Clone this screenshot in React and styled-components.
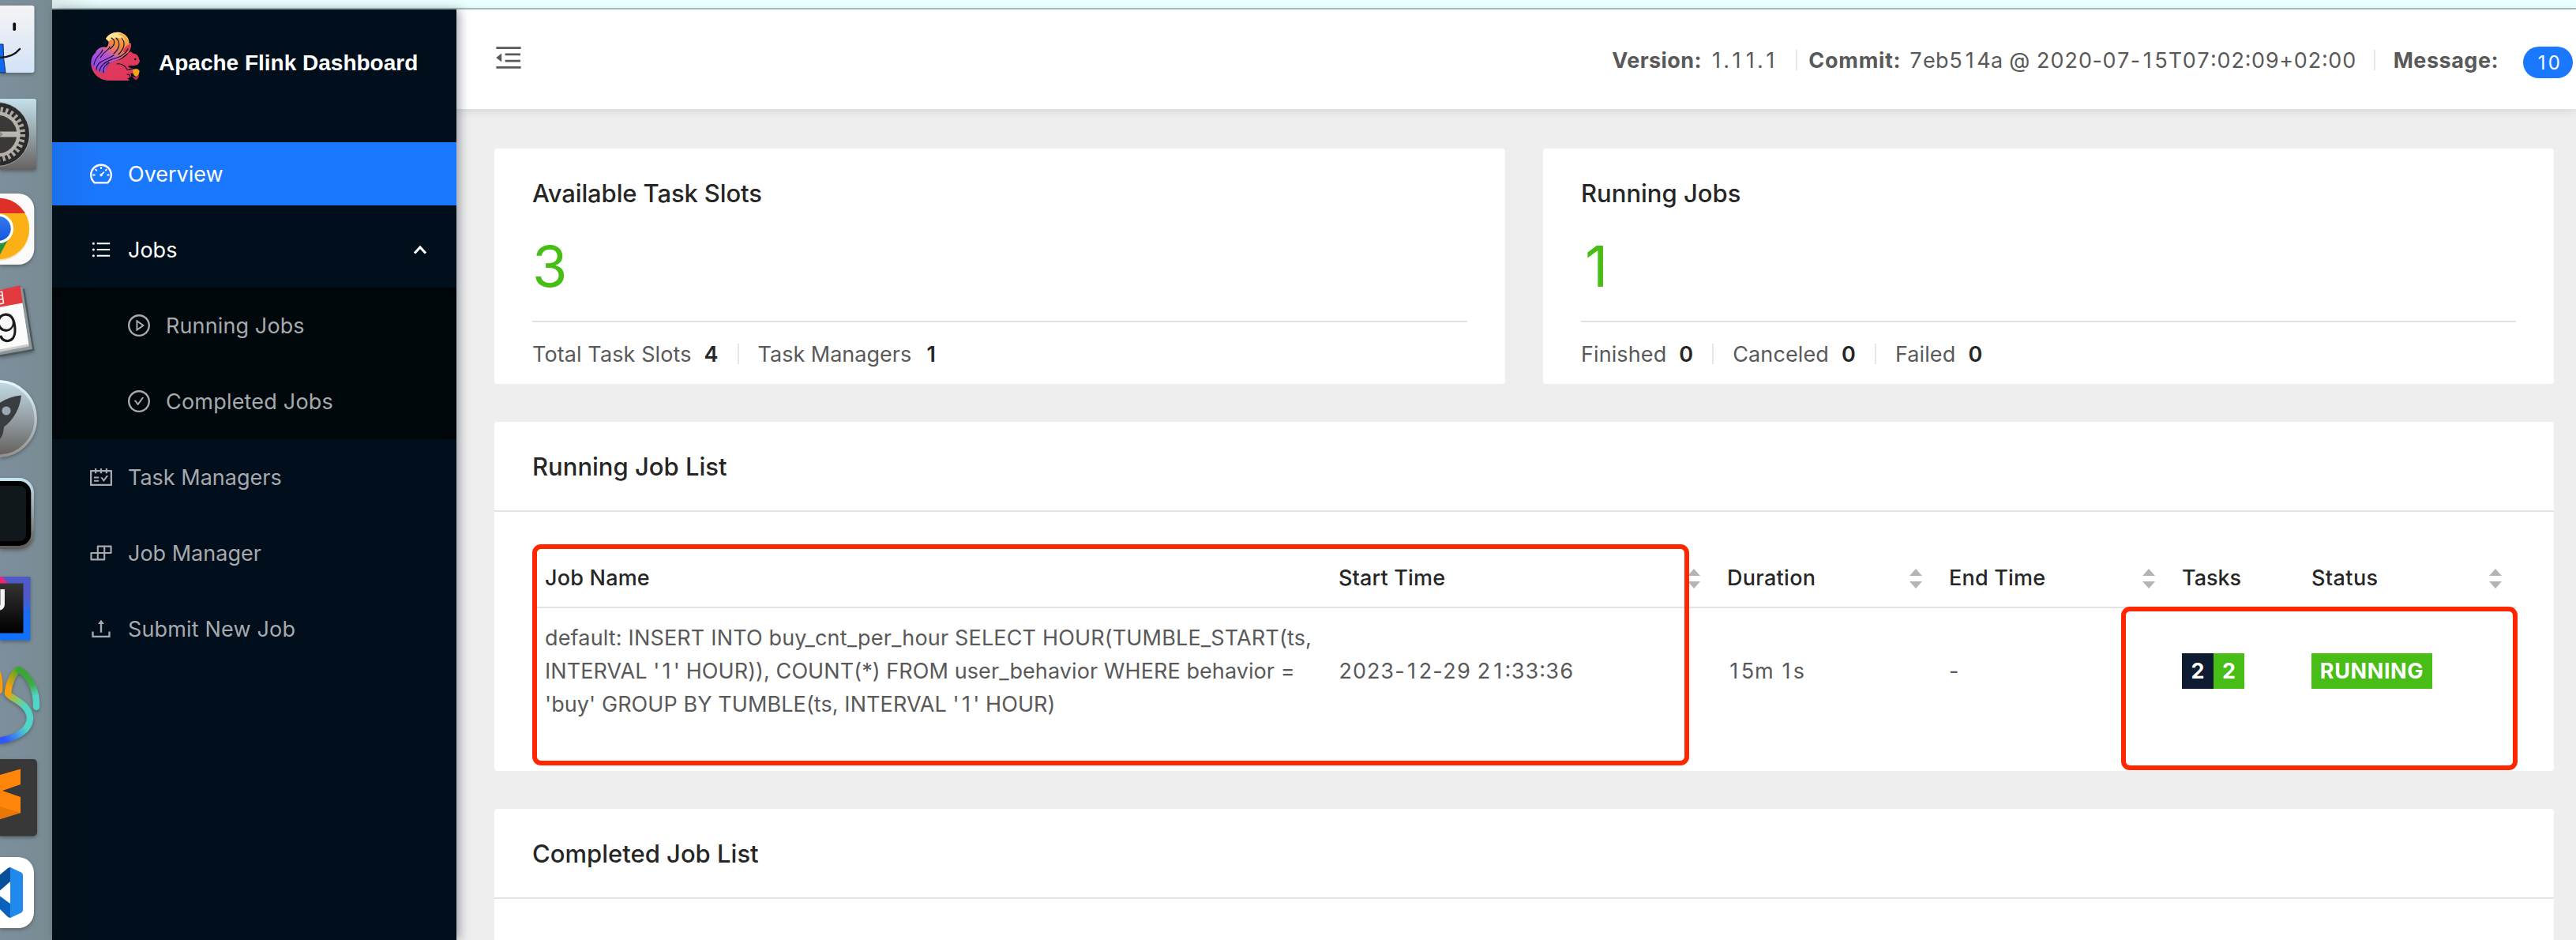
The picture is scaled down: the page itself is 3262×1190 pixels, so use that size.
import React from "react";
import styled, { createGlobalStyle } from "styled-components";
import {
  AiOutlineBars,
  AiOutlineBuild,
  AiOutlineCheckCircle,
  AiOutlineDashboard,
  AiOutlineMenuFold,
  AiOutlinePlayCircle,
  AiOutlineSchedule,
  AiOutlineUpload,
} from "react-icons/ai";

const GlobalStyle = createGlobalStyle`
  * { box-sizing: border-box; }
  body {
    margin: 0;
    background: #eeeeee;
    color: #595959;
    font-family: Inter, "Noto Sans", "Noto Sans CJK SC", sans-serif;
    font-size: 27px;
    overflow: hidden;
  }
`;

const Desktop = styled.div`
  display: flex;
  width: 3262px;
  height: 1190px;
  overflow: hidden;
`;

/* ---------- Dock ---------- */

const Dock = styled.aside`
  display: flex;
  flex-direction: column;
  flex: none;
  width: 66px;
  height: 1190px;
  background: linear-gradient(90deg, #7d8f9b 0%, #7b8d98 45%, #788c93 100%);
`;

const DockIcon = styled.svg`
  display: block;
  flex: none;
  width: 66px;
  height: ${(p) => p.$h}px;
  margin-top: ${(p) => p.$gap}px;
  filter: drop-shadow(0 2px 2px rgba(0, 0, 0, 0.3));
`;

function FinderIcon() {
  return (
    <DockIcon viewBox="0 0 66 100" $h={100} $gap={0}>
      <defs>
        <linearGradient id="finder" x1="0" y1="0" x2="0" y2="1">
          <stop offset="0" stopColor="#f5f4f4" />
          <stop offset="1" stopColor="#d3e2f7" />
        </linearGradient>
      </defs>
      <rect x="-20" y="7" width="63.5" height="85" rx="3" fill="url(#finder)" />
      <path d="M-2 56H4Q4 75 7 92H-2Z" fill="#0f68f2" stroke="#0a2a5c" strokeWidth="1" />
      <path d="M-2 73Q16 73 25 62" fill="none" stroke="#161616" strokeWidth="2.4" strokeLinecap="round" />
      <rect x="16.3" y="28.5" width="3.8" height="10.5" rx="1.8" fill="#111" />
    </DockIcon>
  );
}

function SettingsIcon() {
  return (
    <DockIcon viewBox="0 120 66 102" $h={102} $gap={20}>
      <defs>
        <linearGradient id="prefs" x1="0" y1="0" x2="0" y2="1">
          <stop offset="0" stopColor="#c4e0ea" />
          <stop offset="0.5" stopColor="#97a3a8" />
          <stop offset="1" stopColor="#66625f" />
        </linearGradient>
      </defs>
      <rect x="-20" y="125" width="66" height="90" rx="3" fill="url(#prefs)" />
      <circle cx="-3" cy="170" r="40.5" fill="#2b2b2b" stroke="#b8c3c9" strokeWidth="0.8" />
      <circle cx="-3" cy="170" r="31.5" fill="none" stroke="#aaa69f" strokeWidth="7" strokeDasharray="3.3 3.3" />
      <circle cx="-3" cy="170" r="26.5" fill="#3a3937" stroke="#b4b1aa" strokeWidth="4.5" />
      <path d="M-3 166.5H25V173.5H-3Z" fill="#bab7b0" />
      <path d="M-8 160L4 170L-8 180Z" fill="#8d8b86" />
    </DockIcon>
  );
}

function ChromeIcon() {
  return (
    <DockIcon viewBox="0 240 66 100" $h={100} $gap={18}>
      <defs>
        <clipPath id="chromeDisc">
          <circle cx="-1.7" cy="289.4" r="38.8" />
        </clipPath>
        <linearGradient id="chromeBlue" x1="0" y1="0" x2="0" y2="1">
          <stop offset="0" stopColor="#3478ee" />
          <stop offset="1" stopColor="#1558dd" />
        </linearGradient>
      </defs>
      <rect x="-50" y="245" width="93.3" height="90" rx="20" fill="#fafafa" />
      <circle cx="-1.7" cy="291" r="39" fill="#f3dcae" />
      <g clipPath="url(#chromeDisc)">
        <rect x="-45" y="245" width="90" height="90" fill="#fbb116" />
        <rect x="-45" y="245" width="90" height="25" fill="#df2f29" />
        <path d="M-20 292L12 300L-2 326L-20 330Z" fill="#27913b" />
      </g>
      <circle cx="-1.7" cy="289.4" r="18.8" fill="#fff" />
      <circle cx="-1.7" cy="289.4" r="15.4" fill="url(#chromeBlue)" />
    </DockIcon>
  );
}

const CalendarText = styled.text`
  font-family: ${(p) => (p.$cjk ? '"Noto Sans CJK SC", sans-serif' : "Inter, sans-serif")};
  font-size: ${(p) => p.$size}px;
  font-weight: ${(p) => p.$weight || 300};
  text-anchor: end;
`;

function CalendarIcon() {
  return (
    <DockIcon viewBox="0 356 66 104" $h={104} $gap={16}>
      <path d="M-2 366L31 365.5L43.5 444L-2 452Z" fill="#4d5658" />
      <path d="M-2 366L28.5 364L41 442L-2 449.5Z" fill="#8b979b" />
      <path d="M-2 386L28.3 383.5L36.8 438.5L-2 446Z" fill="#cfcdca" />
      <path d="M-2 386L28.3 383.5L36.3 435.5L-2 442.5Z" fill="#fbfbfb" />
      <path d="M-2 367.5L25.5 361.5L28.7 383.5L-2 389Z" fill="#e23a3e" />
      <CalendarText $cjk $size={19} $weight={400} x="8.5" y="383" fill="#fff" transform="rotate(-8 8 382)">
        月
      </CalendarText>
      <CalendarText $size={49} x="26" y="430.5" fill="#1b1b1b" transform="rotate(-8 25 431)">
        9
      </CalendarText>
    </DockIcon>
  );
}

function LaunchpadIcon() {
  return (
    <DockIcon viewBox="0 476 66 108" $h={108} $gap={16}>
      <defs>
        <linearGradient id="launch" x1="0" y1="0" x2="0" y2="1">
          <stop offset="0" stopColor="#c2dbe5" />
          <stop offset="0.5" stopColor="#95a0a5" />
          <stop offset="1" stopColor="#635f5c" />
        </linearGradient>
        <linearGradient id="launchRing" x1="0" y1="0" x2="0" y2="1">
          <stop offset="0" stopColor="#e6f8ff" />
          <stop offset="1" stopColor="#95918f" />
        </linearGradient>
      </defs>
      <circle cx="-2" cy="530" r="47.3" fill="url(#launch)" stroke="url(#launchRing)" strokeWidth="3.4" />
      <path d="M27 500.5Q11 502 -2 511V558Q4.5 552 5 540.5Q24 526 27 500.5Z" fill="#3a3d40" />
      <circle cx="8" cy="520" r="5.6" fill="#9ba9b0" />
    </DockIcon>
  );
}

function TerminalIcon() {
  return (
    <DockIcon viewBox="0 600 66 100" $h={100} $gap={16}>
      <defs>
        <linearGradient id="term" x1="0" y1="0" x2="0" y2="1">
          <stop offset="0" stopColor="#c6e6f2" />
          <stop offset="1" stopColor="#5f5855" />
        </linearGradient>
      </defs>
      <rect x="-40" y="605" width="83" height="90" rx="19" fill="url(#term)" />
      <rect x="-40" y="609" width="79.3" height="82" rx="15" fill="#000" />
      <rect x="-40" y="615" width="73" height="70" rx="8" fill="#11181b" />
    </DockIcon>
  );
}

const IdeaLetters = styled.text`
  font-family: Inter, sans-serif;
  font-size: 37px;
  font-weight: 700;
  text-anchor: end;
`;

function IdeaIcon() {
  return (
    <DockIcon viewBox="0 724 66 92" $h={92} $gap={24}>
      <defs>
        <linearGradient id="idea" x1="0" y1="0" x2="0" y2="1">
          <stop offset="0" stopColor="#4b5ac6" />
          <stop offset="0.5" stopColor="#3763e0" />
          <stop offset="0.51" stopColor="#1f68f0" />
          <stop offset="1" stopColor="#0f72fb" />
        </linearGradient>
        <linearGradient id="ideaCore" x1="0" y1="0" x2="0" y2="1">
          <stop offset="0" stopColor="#333" />
          <stop offset="1" stopColor="#000" />
        </linearGradient>
      </defs>
      <rect x="-10" y="730" width="48.3" height="80.5" fill="url(#idea)" />
      <path d="M29.5 767L38.3 757V730H3L10 738.5H29.5Z" fill="#4e5ac6" />
      <path d="M-2 730H3L10.5 739H-2Z" fill="#e4287a" />
      <rect x="-10" y="738.5" width="39.5" height="63" fill="url(#ideaCore)" />
      <IdeaLetters x="8.5" y="773" fill="#f4f4f4">
        J
      </IdeaLetters>
    </DockIcon>
  );
}

function RibbonIcon() {
  return (
    <DockIcon viewBox="0 836 66 112" $h={112} $gap={20}>
      <defs>
        <linearGradient id="r1" gradientUnits="userSpaceOnUse" x1="25" y1="848" x2="46" y2="895">
          <stop offset="0.1" stopColor="#3ba536" />
          <stop offset="0.45" stopColor="#40aa45" />
          <stop offset="0.75" stopColor="#50d6c8" />
        </linearGradient>
        <linearGradient id="r2" gradientUnits="userSpaceOnUse" x1="10" y1="868" x2="27" y2="850">
          <stop offset="0" stopColor="#f59f0a" />
          <stop offset="1" stopColor="#45a733" />
        </linearGradient>
        <linearGradient id="r3" gradientUnits="userSpaceOnUse" x1="10" y1="876" x2="32" y2="894">
          <stop offset="0" stopColor="#f59f0a" />
          <stop offset="0.5" stopColor="#8cc765" />
          <stop offset="1" stopColor="#50d6c8" />
        </linearGradient>
        <linearGradient id="r4" gradientUnits="userSpaceOnUse" x1="32" y1="920" x2="8" y2="938">
          <stop offset="0" stopColor="#50d6c8" />
          <stop offset="1" stopColor="#3156fb" />
        </linearGradient>
      </defs>
      <g fill="none" strokeWidth="8.4" strokeLinecap="round">
        <path d="M-4 850Q0 860 -1 874" stroke="#f99b0a" />
        <path d="M38 909C38 925 18 936 -4 938" stroke="url(#r4)" />
        <path d="M10 877C10 884 38 889 38 910" stroke="url(#r3)" />
        <path d="M24 848C18 848 11 866 10 877" stroke="url(#r2)" />
        <path d="M46 895C47 869 33 852 24 848" stroke="url(#r1)" />
      </g>
    </DockIcon>
  );
}

function SublimeIcon() {
  return (
    <DockIcon viewBox="0 956 66 108" $h={108} $gap={8}>
      <rect x="-20" y="961" width="67" height="97.5" rx="5" fill="#383838" />
      <path d="M-2 981.5L26 973.5V993L3 1001L26 1009V1029L-2 1037.5Z" fill="#ff860a" />
      <path d="M-2 1020.5L26 1029L-2 1037.5Z" fill="#e87708" />
    </DockIcon>
  );
}

function CodeIcon() {
  return (
    <DockIcon viewBox="0 1080 66 100" $h={100} $gap={16}>
      <rect x="-50" y="1085" width="93" height="90" rx="20" fill="#fff" />
      <path d="M-2 1109L10 1099Q12 1098 13 1098V1116L-2 1129Z" fill="#0a4f9b" />
      <path d="M-2 1133L13 1144V1162Q11 1162 9 1160L-2 1149Z" fill="#0b62bd" />
      <path d="M13 1098L27 1104.5Q29 1105.5 29 1108V1152Q29 1154.5 27 1155.5L13 1162Z" fill="#1f89ec" />
    </DockIcon>
  );
}

/* ---------- Window ---------- */

const Window = styled.div`
  display: flex;
  flex-direction: column;
  flex: 1;
  min-width: 0;
`;

const BrowserEdge = styled.div`
  flex: none;
  height: 12px;
  border-bottom: 2px solid #a8c1be;
  background: linear-gradient(90deg, #dcecea 0, #ebffff 60px);
`;

const Layout = styled.div`
  display: flex;
  flex: 1;
  min-height: 0;
`;

const Sider = styled.nav`
  position: relative;
  z-index: 2;
  flex: none;
  width: 512px;
  background: linear-gradient(90deg, #020f18 0, #010f1d 60px);
  box-shadow: 4px 0 12px rgba(0, 21, 41, 0.35);
  color: #a6a9ad;
`;

const Brand = styled.div`
  display: flex;
  align-items: flex-start;
  gap: 23px;
  height: 160px;
  padding: 26px 0 0 48px;
`;

const BrandName = styled.h1`
  margin: 22px 0 0;
  color: #fff;
  font: 700 28px/40px "Liberation Sans", Arial, sans-serif;
  white-space: nowrap;
`;

const Squirrel = styled.svg`
  display: block;
  width: 64px;
  height: 66px;
`;

function FlinkLogo() {
  return (
    <Squirrel viewBox="114 38 64 66">
      <defs>
        <linearGradient id="tail" x1="0.7" y1="0" x2="0.2" y2="1">
          <stop offset="0" stopColor="#f8b24a" />
          <stop offset="0.22" stopColor="#f08a3c" />
          <stop offset="0.38" stopColor="#e0707a" />
          <stop offset="0.5" stopColor="#b652d8" />
          <stop offset="0.8" stopColor="#8f49e8" />
          <stop offset="1" stopColor="#dd3a5c" />
        </linearGradient>
      </defs>
      <path d="M134 49C138 42 147 39 155 42C160 44 164 49 163.5 55L166 55C166 61 164 67 159 69C152 76 146 77 141 79C133 83 133 92 137 101.5L131 101C120 97 114 87 115.5 77C116 72 119 68 121 67C122 62 129 58 135 60C138 56 139 52 134 49Z" fill="url(#tail)" />
      <path d="M134 49C138 42 147 39.5 154 41.5L149 44C153 44 157 47 158 51C149 45 143 49 137 52Z" fill="#fce093" />
      <path d="M134 101.5C119 97 116 88 117 81C121 92 127 93 134 91C133 86 139 77 150 76C156 74 161 70 163 66.5C166 64.5 167 66 168 67.5C173 68 176 71 176 75C178 77 177 79 174 82C169 84 165 82 162 84C166 88 171 86 172 90C170 94 167 92 165 93C168 97 164 98 161 100C163 100 166 101.5 162 102H138Z" fill="#de395c" />
      <path d="M156 65C157 60 161 57 166 55C166 61 163 65 159 68Z" fill="#de395c" />
      <g fill="none" stroke="#12101c" strokeWidth="1.1" strokeLinecap="round">
        <path d="M139 62C147 56 146 51 141 48" />
        <path d="M144 68C153 60 152 53 147 48" />
        <path d="M150 69C158 61 159 54 154 48" />
        <path d="M127 73C133 63 138 64 139 59" />
        <path d="M119 82C121 70 128 70 130 63" />
        <path d="M122 88C123 77 133 77 144 70" />
        <path d="M126 90C127 82 134 78 142 75C151 73 158 70 162 62" />
        <path d="M131 92C130 85 134 82 138 79" />
        <path d="M148 81C153 80 159 83 161 88C163 89 166 87 168 87" />
        <path d="M161 94C163 94 165 95 164 97" />
      </g>
      <circle cx="171.3" cy="75" r="1.3" fill="#111" />
      <path d="M168 89Q172 85 176.5 89Q177 94 173 97Q168 96 168 89Z" fill="#f8a21c" />
      <path d="M167 96Q172 99 176 95Q176 99 172 101.5Q169 100 167 96Z" fill="#b82a52" />
    </Squirrel>
  );
}

const Menu = styled.ul`
  display: flex;
  flex-direction: column;
  margin: 0;
  padding: 0;
  list-style: none;
`;

const SubMenu = styled(Menu)`
  background: #01080c;
  box-shadow: inset 0 4px 16px rgba(0, 0, 0, 0.45);
`;

const MenuItem = styled.li`
  display: flex;
  align-items: center;
  height: 80px;
  margin: 8px 0;
  padding: 0 32px 0 ${(p) => (p.$nested ? 94 : 46)}px;
  gap: 18px;
  color: ${(p) => (p.$bright ? "#fff" : "#a6a9ad")};
  background: ${(p) => (p.$active ? "linear-gradient(90deg, #1a70ee 0, #1a78ff 60px)" : "none")};
  letter-spacing: ${(p) => p.$ls || 0}px;
  white-space: nowrap;
`;

const MenuGlyph = styled.span`
  display: flex;
  flex: none;
  align-items: center;
  justify-content: center;
  width: 32px;
  font-size: ${(p) => (p.$small ? 28 : 32)}px;
`;

const Chevron = styled.svg`
  width: 28px;
  height: 28px;
  margin-left: auto;
`;

const Content = styled.div`
  display: flex;
  flex-direction: column;
  flex: 1;
  min-width: 0;
`;

const TopBar = styled.header`
  position: relative;
  z-index: 1;
  display: flex;
  flex: none;
  align-items: center;
  justify-content: space-between;
  height: 126px;
  padding: 0 4px 4px 46px;
  background: #fff;
  box-shadow: 0 2px 12px rgba(0, 21, 41, 0.12);

  & > svg {
    width: 40px;
    height: 40px;
  }
`;

const BuildInfo = styled.div`
  display: flex;
  align-items: center;
  margin-top: 6px;
  white-space: pre;
`;

const Label = styled.strong`
  font-weight: 700;
  letter-spacing: ${(p) => p.$ls || 0}px;
`;

const Value = styled.span`
  margin-left: 10px;
  letter-spacing: ${(p) => p.$ls || 0}px;
`;

const Divider = styled.i`
  flex: none;
  width: 2px;
  height: 26px;
  margin: 0 ${(p) => p.$right ?? 24}px 0 ${(p) => p.$left ?? 24}px;
  background: #e6e6e6;
`;

const CountBadge = styled.span`
  display: flex;
  align-items: center;
  justify-content: center;
  width: 63px;
  height: 40px;
  margin: 6px 0 0 31px;
  border-radius: 20px;
  background: #1a78ff;
  color: #fff;
  font-size: 24px;
`;

/* Digits share one advance width, while a 1 keeps its plain, unserifed shape. */
const DigitRun = styled.span`
  font-variant-numeric: tabular-nums;
`;

const One = styled.span`
  display: inline-block;
  width: 0.648em;
  text-align: center;
`;

const RaisedColon = styled.span`
  font-feature-settings: "case";
`;

function Digits({ children }) {
  return (
    <span>
      {children.match(/1|[02-9]+|:|[^0-9:]+/g).map((part, i) => {
        if (part === "1") return <One key={i}>1</One>;
        if (part === ":") return <RaisedColon key={i}>:</RaisedColon>;
        if (/\d/.test(part)) return <DigitRun key={i}>{part}</DigitRun>;
        return part;
      })}
    </span>
  );
}

const Main = styled.main`
  display: flex;
  flex-direction: column;
  gap: 48px;
  padding: 50px 28px 0 48px;
`;

const StatRow = styled.section`
  display: grid;
  grid-template-columns: 1fr 1fr;
  gap: 48px;
`;

const Card = styled.section`
  border-radius: 4px;
  background: #fff;
`;

const StatCard = styled(Card)`
  height: 298px;
  padding: 33px 48px 0;
`;

const Title = styled.h2`
  margin: 0;
  color: #262626;
  font-size: 31px;
  font-weight: 500;
  line-height: 48px;
  letter-spacing: ${(p) => p.$ls || 0}px;
`;

const BigNumber = styled.div`
  height: 139px;
  padding: 28px 0 0 ${(p) => p.$indent || 0}px;
  color: #47bd15;
  font-size: 72px;
  line-height: 80px;
`;

const Facts = styled.div`
  display: flex;
  align-items: center;
  height: 82px;
  margin-top: -2px;
  border-top: 2px solid #e1e1e1;
`;

const Fact = styled.span`
  letter-spacing: ${(p) => p.$ls || 0}px;
`;

const FactNumber = styled.b`
  width: 18px;
  margin-left: 16px;
  color: #262626;
  font-weight: 600;
  text-align: center;
`;

const CardHead = styled.div`
  display: flex;
  align-items: center;
  height: 114px;
  padding: 2px 48px 0;
  border-bottom: 2px solid #e3e3e3;
`;

const TableCard = styled(Card)`
  height: 442px;
`;

const TableWrap = styled.div`
  position: relative;
  padding: 48px;
`;

const EmptyBody = styled.div`
  height: 96px;
`;

const row = `
  display: grid;
  grid-template-columns: 1005px 492px 281px 295px 164px 275px;
  align-items: center;
`;

const HeadRow = styled.div`
  ${row}
  height: 74px;
  border-bottom: 2px solid #e3e3e3;
  color: #262626;
  font-weight: 500;
`;

const BodyRow = styled.div`
  ${row}
  height: 159px;
`;

const Cell = styled.div`
  display: flex;
  align-items: center;
  justify-content: space-between;
  padding: 0 16px;
  line-height: 42px;
  letter-spacing: ${(p) => p.$ls || 0}px;
`;

const QueryLine = styled.span`
  display: block;
  letter-spacing: ${(p) => p.$ls || 0}px;
  white-space: nowrap;
`;

const Sorter = styled.svg`
  width: 20px;
  height: 28px;
`;

function Sort() {
  return (
    <Sorter viewBox="0 0 20 28" fill="#b4b4b4">
      <path d="M10 2L18 11H2Z" />
      <path d="M2 18H18L10 27Z" />
    </Sorter>
  );
}

const Tag = styled.span`
  display: inline-flex;
  align-items: center;
  justify-content: center;
  width: ${(p) => p.$w}px;
  height: 45px;
  background: ${(p) => p.$color};
  color: #fff;
  font-weight: 700;
  letter-spacing: ${(p) => p.$ls || 0}px;
`;

const TagGroup = styled.div`
  display: flex;
`;

const Marker = styled.div`
  position: absolute;
  top: ${(p) => p.$top}px;
  left: ${(p) => p.$left}px;
  width: ${(p) => p.$w}px;
  height: ${(p) => p.$h}px;
  border: 6px solid #ff2700;
  border-radius: 11px;
  pointer-events: none;
`;

export default function App() {
  return (
    <>
      <GlobalStyle />
      <Desktop>
        <Dock>
          <FinderIcon />
          <SettingsIcon />
          <ChromeIcon />
          <CalendarIcon />
          <LaunchpadIcon />
          <TerminalIcon />
          <IdeaIcon />
          <RibbonIcon />
          <SublimeIcon />
          <CodeIcon />
        </Dock>
        <Window>
          <BrowserEdge />
          <Layout>
            <Sider>
              <Brand>
                <FlinkLogo />
                <BrandName>Apache Flink Dashboard</BrandName>
              </Brand>
              <Menu>
                <MenuItem $active $bright>
                  <MenuGlyph><AiOutlineDashboard /></MenuGlyph>
                  Overview
                </MenuItem>
                <MenuItem $bright>
                  <MenuGlyph $small><AiOutlineBars /></MenuGlyph>
                  Jobs
                  <Chevron viewBox="0 0 28 28" fill="none" stroke="#fff" strokeWidth="3.2">
                    <path d="M7 18.5L14 11L21 18.5" />
                  </Chevron>
                </MenuItem>
                <SubMenu>
                  <MenuItem $nested $ls={0.12}>
                    <MenuGlyph><AiOutlinePlayCircle /></MenuGlyph>
                    Running Jobs
                  </MenuItem>
                  <MenuItem $nested $ls={0.2}>
                    <MenuGlyph><AiOutlineCheckCircle /></MenuGlyph>
                    Completed Jobs
                  </MenuItem>
                </SubMenu>
                <MenuItem>
                  <MenuGlyph><AiOutlineSchedule /></MenuGlyph>
                  Task Managers
                </MenuItem>
                <MenuItem>
                  <MenuGlyph><AiOutlineBuild /></MenuGlyph>
                  Job Manager
                </MenuItem>
                <MenuItem $ls={0.16}>
                  <MenuGlyph><AiOutlineUpload /></MenuGlyph>
                  Submit New Job
                </MenuItem>
              </Menu>
            </Sider>
            <Content>
              <TopBar>
                <AiOutlineMenuFold />
                <BuildInfo>
                  <Label $ls={0.4}>Version:</Label>
                  <Value><Digits>1.11.1</Digits></Value>
                  <Divider $right={14} />
                  <Label $ls={0.7}>Commit:</Label>
                  <Value $ls={0.27}><Digits>7eb514a @ 2020-07-15T07:02:09+02:00</Digits></Value>
                  <Divider $left={22} $right={23} />
                  <Label $ls={0.5}>Message:</Label>
                  <CountBadge><Digits>10</Digits></CountBadge>
                </BuildInfo>
              </TopBar>
              <Main>
                <StatRow>
                  <StatCard>
                    <Title $ls={-0.12}>Available Task Slots</Title>
                    <BigNumber>3</BigNumber>
                    <Facts>
                      <Fact $ls={0.1}>Total Task Slots</Fact>
                      <FactNumber>4</FactNumber>
                      <Divider />
                      <Fact>Task Managers</Fact>
                      <FactNumber>1</FactNumber>
                    </Facts>
                  </StatCard>
                  <StatCard>
                    <Title>Running Jobs</Title>
                    <BigNumber $indent={5}>1</BigNumber>
                    <Facts>
                      <Fact $ls={0.1}>Finished</Fact>
                      <FactNumber>0</FactNumber>
                      <Divider />
                      <Fact $ls={0.1}>Canceled</Fact>
                      <FactNumber>0</FactNumber>
                      <Divider />
                      <Fact $ls={0.1}>Failed</Fact>
                      <FactNumber>0</FactNumber>
                    </Facts>
                  </StatCard>
                </StatRow>
                <TableCard>
                  <CardHead>
                    <Title>Running Job List</Title>
                  </CardHead>
                  <TableWrap>
                    <HeadRow>
                      <Cell $ls={0.2}>Job Name</Cell>
                      <Cell $ls={0.15}>Start Time<Sort /></Cell>
                      <Cell $ls={0.3}>Duration<Sort /></Cell>
                      <Cell $ls={0.2}>End Time<Sort /></Cell>
                      <Cell>Tasks</Cell>
                      <Cell $ls={0.4}>Status<Sort /></Cell>
                    </HeadRow>
                    <BodyRow>
                      <Cell>
                        <div>
                          <QueryLine $ls={0.16}>default: INSERT INTO buy_cnt_per_hour SELECT HOUR(TUMBLE_START(ts,</QueryLine>
                          <QueryLine $ls={0.08}><Digits>INTERVAL '1' HOUR)), COUNT(*) FROM user_behavior WHERE behavior =</Digits></QueryLine>
                          <QueryLine $ls={0.08}><Digits>'buy' GROUP BY TUMBLE(ts, INTERVAL '1' HOUR)</Digits></QueryLine>
                        </div>
                      </Cell>
                      <Cell $ls={0.28}><Digits>2023-12-29 21:33:36</Digits></Cell>
                      <Cell><Digits>15m 1s</Digits></Cell>
                      <Cell>-</Cell>
                      <Cell>
                        <TagGroup>
                          <Tag $w={40} $color="#0f1b33">2</Tag>
                          <Tag $w={39} $color="#47bd15">2</Tag>
                        </TagGroup>
                      </Cell>
                      <Cell>
                        <Tag $w={153} $ls={0.6} $color="#47bd15">RUNNING</Tag>
                      </Cell>
                    </BodyRow>
                    <Marker $left={48} $top={41} $w={1465} $h={280} />
                    <Marker $left={2060} $top={120} $w={502} $h={207} />
                  </TableWrap>
                </TableCard>
                <Card>
                  <CardHead>
                    <Title>Completed Job List</Title>
                  </CardHead>
                  <EmptyBody />
                </Card>
              </Main>
            </Content>
          </Layout>
        </Window>
      </Desktop>
    </>
  );
}
